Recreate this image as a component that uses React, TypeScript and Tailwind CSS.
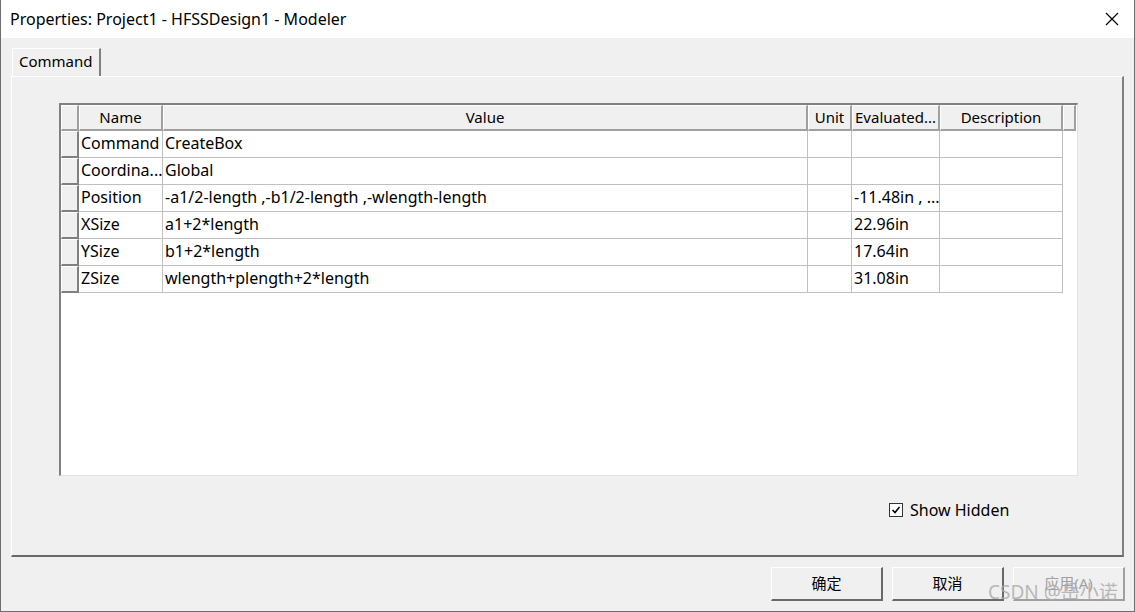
import React from 'react';

const FONT = { fontFamily: '"Noto Sans", "Noto Sans CJK SC", sans-serif' };

type Row = { name: string; value: string; unit: string; evaluated: string; description: string };

const rows: Row[] = [
  { name: 'Command', value: 'CreateBox', unit: '', evaluated: '', description: '' },
  { name: 'Coordina...', value: 'Global', unit: '', evaluated: '', description: '' },
  { name: 'Position', value: '-a1/2-length ,-b1/2-length ,-wlength-length', unit: '', evaluated: '-11.48in , ...', description: '' },
  { name: 'XSize', value: 'a1+2*length', unit: '', evaluated: '22.96in', description: '' },
  { name: 'YSize', value: 'b1+2*length', unit: '', evaluated: '17.64in', description: '' },
  { name: 'ZSize', value: 'wlength+plength+2*length', unit: '', evaluated: '31.08in', description: '' },
];

// column widths in px: row header, name, value, unit, evaluated, description
const cols = 'grid-cols-[18px_84px_645px_44px_88px_123px]';

function HeaderCell({ children, className = '' }: { children?: React.ReactNode; className?: string }) {
  return (
    <div
      className={`h-[26px] flex items-center justify-center bg-[#f0f0f0] border-t border-l border-t-white border-l-white border-r-2 border-b-2 border-r-[#a0a0a0] border-b-[#a0a0a0] text-[15px] text-black truncate ${className}`}
    >
      {children}
    </div>
  );
}

function Cell({ children }: { children?: React.ReactNode }) {
  return (
    <div className="h-[27px] flex items-center pl-[2px] pb-[2px] border-r border-b border-[#c0c0c0] whitespace-nowrap overflow-hidden">
      {children}
    </div>
  );
}

function PropertyGrid() {
  return (
    <div className="w-[1019px] h-[373px] bg-white border-t-2 border-l-2 border-t-[#808080] border-l-[#808080] border-r border-b border-r-[#e3e3e3] border-b-[#e3e3e3]">
      {/* header */}
      <div className="flex">
        <div className={`grid ${cols}`}>
          <HeaderCell />
          <HeaderCell>Name</HeaderCell>
          <HeaderCell>Value</HeaderCell>
          <HeaderCell>Unit</HeaderCell>
          <HeaderCell className="justify-start pl-[2px]">Evaluated...</HeaderCell>
          <HeaderCell>Description</HeaderCell>
        </div>
        <HeaderCell className="w-[13px]" />
      </div>
      {/* rows */}
      {rows.map((r) => (
        <div key={r.name} className={`grid ${cols} text-[16px] leading-[20px] text-black`}>
          <div className="h-[27px] bg-[#f0f0f0] border-t border-l border-t-white border-l-white border-r-2 border-b-2 border-r-[#808080] border-b-[#808080]" />
          <Cell>{r.name}</Cell>
          <Cell>{r.value}</Cell>
          <Cell>{r.unit}</Cell>
          <Cell>{r.evaluated}</Cell>
          <Cell>{r.description}</Cell>
        </div>
      ))}
    </div>
  );
}

function DialogButton({ children, disabled = false }: { children: React.ReactNode; disabled?: boolean }) {
  return (
    <button
      disabled={disabled}
      className={`w-[112px] h-[34px] bg-[#f0f0f0] border-t border-l border-t-white border-l-white border-r-2 border-b-2 text-[15px] ${disabled ? 'text-[#a0a0a0] border-r-[#a0a0a0] border-b-[#a0a0a0]' : 'text-black border-r-[#696969] border-b-[#696969]'}`}
    >
      {children}
    </button>
  );
}

export default function App() {
  return (
    <div className="w-[1135px] h-[612px] flex flex-col bg-[#f0f0f0] border-l border-r border-b border-[#6e6e6e] relative overflow-hidden" style={FONT}>
      {/* title bar */}
      <div className="h-[38px] bg-white flex items-center justify-between pl-[9px] pr-[14px] shrink-0">
        <span className="text-[16px] text-black">Properties: Project1 - HFSSDesign1 - Modeler</span>
        <svg width="16" height="16" viewBox="0 0 16 16" className="text-black">
          <path d="M2 2L14 14M14 2L2 14" stroke="currentColor" strokeWidth="1.2" fill="none" />
        </svg>
      </div>

      {/* tabs */}
      <div className="flex pl-[10px] pt-[10px] shrink-0">
        <div className="h-[28px] pl-[6px] pr-[6px] pb-[2px] flex items-center bg-[#f0f0f0] border-t border-l border-t-white border-l-white border-r-2 border-r-[#808080] text-[15px] text-black ml-[1px]">
          Command
        </div>
      </div>

      {/* tab panel */}
      <div className="ml-[10px] mr-[10px] h-[481px] shrink-0 border-l border-t border-l-white border-t-white border-r-2 border-b-2 border-r-[#808080] border-b-[#696969] flex flex-col">
        <div className="pl-[47px] pt-[26px]">
          <PropertyGrid />
        </div>
        <div className="flex items-center pl-[877px] mt-[22px]">
          <div className="w-[14px] h-[14px] bg-white border border-[#333] flex items-center justify-center">
            <svg width="10" height="10" viewBox="0 0 10 10">
              <path d="M1.5 5L4 7.5L8.5 2" stroke="black" strokeWidth="1.6" fill="none" />
            </svg>
          </div>
          <span className="ml-[7px] text-[16px] text-black">Show Hidden</span>
        </div>
      </div>

      {/* buttons */}
      <div className="flex justify-end gap-[9px] pr-[9px] pt-[10px]">
        <DialogButton>确定</DialogButton>
        <DialogButton>取消</DialogButton>
        <DialogButton disabled>应用(A)</DialogButton>
      </div>

      {/* watermark */}
      <div className="absolute left-[987px] top-[578px] text-[19px] text-[#a8a8a8]/80 pointer-events-none whitespace-nowrap">
        CSDN @岳小诺
      </div>
    </div>
  );
}
